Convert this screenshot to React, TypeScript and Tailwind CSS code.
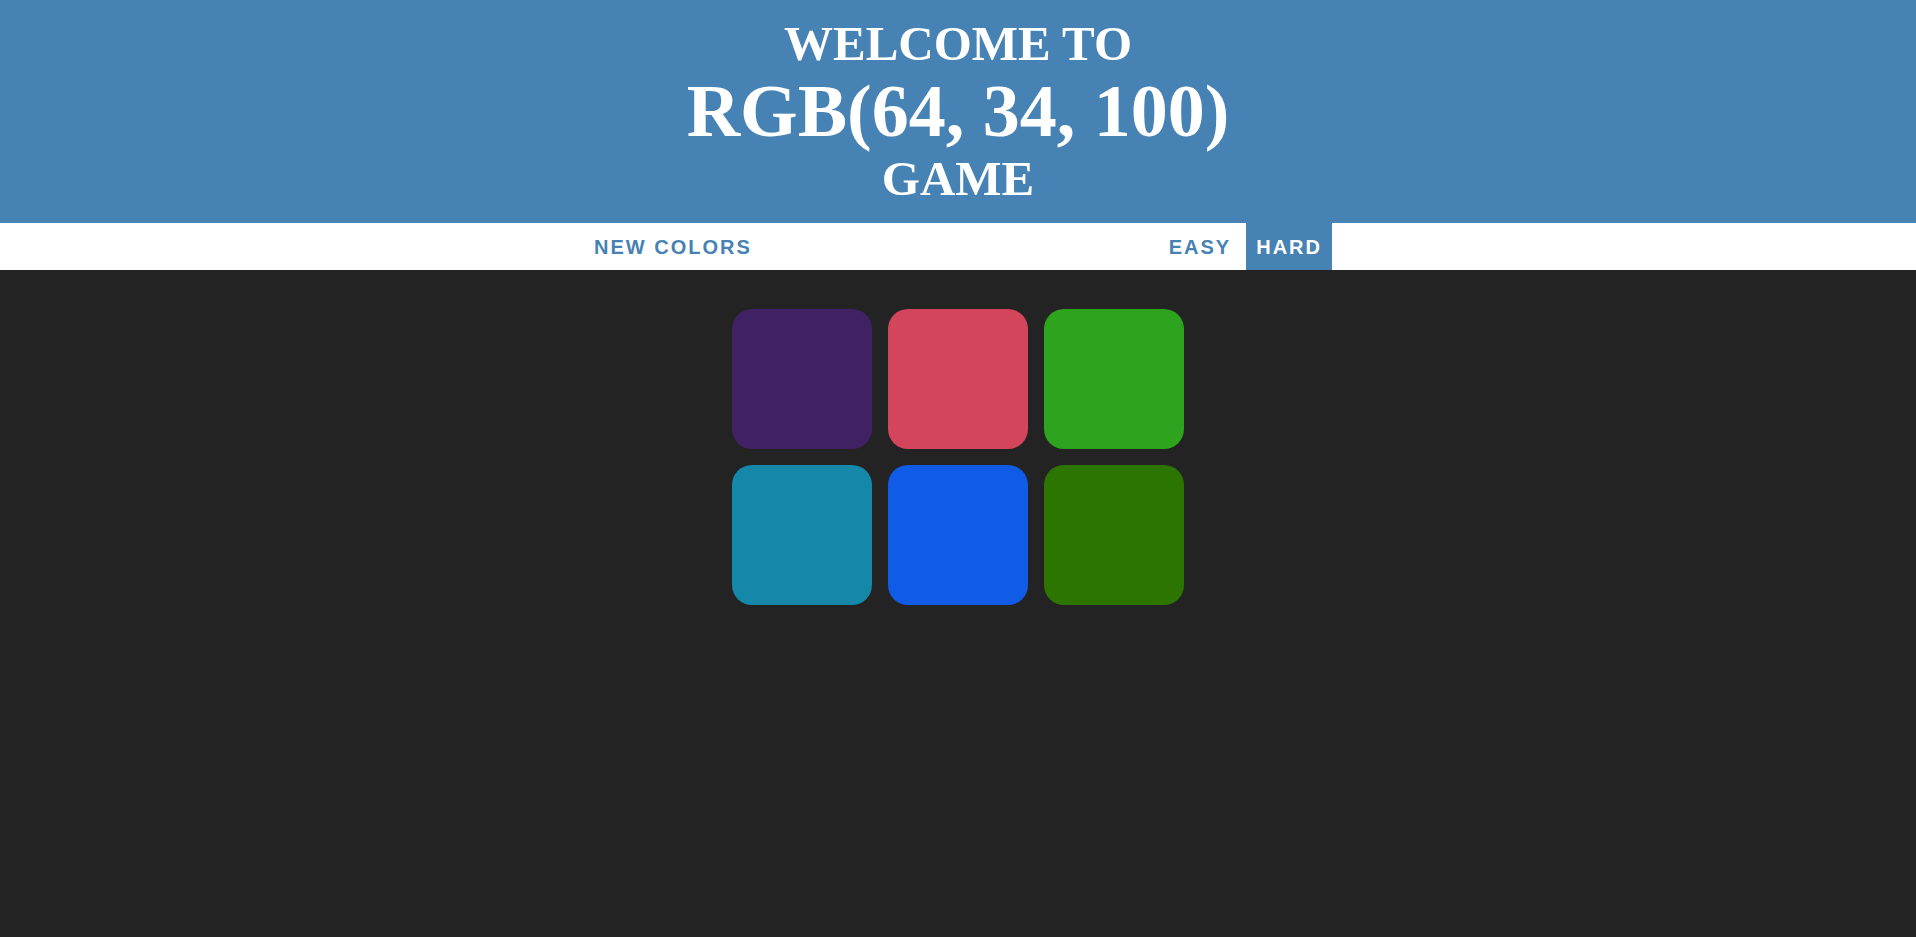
import { useState } from 'react';

const SQUARES = ['#402264', '#d3455a', '#2ea41e', '#1587a8', '#105ce6', '#2c7500'];

export default function App() {
  const [mode, setMode] = useState<'easy' | 'hard'>('hard');

  return (
    <div className="min-h-[937px] bg-[#232323] font-['Liberation_Sans',Arial,sans-serif]">
      {/* Titulo */}
      <h1 className="bg-[#4682b4] py-[17px] text-center font-['Liberation_Serif','Times_New_Roman',serif] font-bold uppercase leading-[1.1] text-white">
        <span className="block text-[49px]">Welcome to</span>
        <span className="block text-[74px]">RGB(64, 34, 100)</span>
        <span className="block text-[49px]">Game</span>
      </h1>

      {/* Barra */}
      <div className="h-[47px] bg-white">
        <div className="mx-auto flex h-full w-[748px] items-stretch text-[20px] font-bold uppercase tracking-[2px]">
          <button className="px-[10px] uppercase text-[#4682b4]">New Colors</button>
          <span className="flex-1" />
          <button
            onClick={() => setMode('easy')}
            className={`px-[10px] uppercase ${mode === 'easy' ? 'bg-[#4682b4] text-white' : 'text-[#4682b4]'}`}
          >
            Easy
          </button>
          <button
            onClick={() => setMode('hard')}
            className={`ml-[5px] px-[10px] uppercase ${mode === 'hard' ? 'bg-[#4682b4] text-white' : 'text-[#4682b4]'}`}
          >
            Hard
          </button>
        </div>
      </div>

      {/* Cuadros */}
      <div className="mx-auto mt-[39px] grid w-[452px] grid-cols-3 gap-4">
        {SQUARES.map((c) => (
          <div key={c} className="h-[140px] w-[140px] rounded-[20px]" style={{ backgroundColor: c }} />
        ))}
      </div>
    </div>
  );
}
